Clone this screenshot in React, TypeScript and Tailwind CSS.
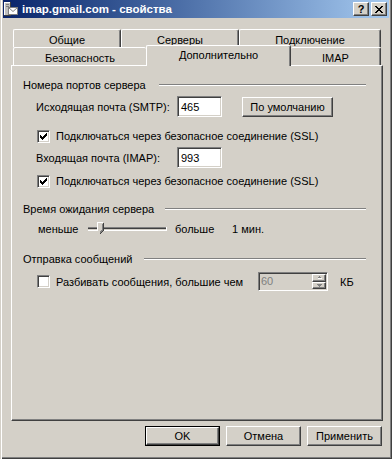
import React from 'react';

const raised =
  'border border-t-white border-l-white border-r-[#404040] border-b-[#404040] shadow-[inset_-1px_-1px_#808080]';
const sunken =
  'border border-t-[#808080] border-l-[#808080] border-r-white border-b-white shadow-[inset_1px_1px_#404040,inset_-1px_-1px_#d4d0c8]';

const CheckMark = () => (
  <svg width="7" height="7" viewBox="0 0 7 7" shapeRendering="crispEdges">
    <rect x="6" y="0" width="1" height="1" />
    <rect x="5" y="1" width="2" height="1" />
    <rect x="0" y="2" width="1" height="1" />
    <rect x="4" y="2" width="3" height="1" />
    <rect x="0" y="3" width="2" height="1" />
    <rect x="3" y="3" width="3" height="1" />
    <rect x="0" y="4" width="5" height="1" />
    <rect x="1" y="5" width="3" height="1" />
    <rect x="2" y="6" width="1" height="1" />
  </svg>
);

const Checkbox = ({ checked }: { checked?: boolean }) => (
  <div className={`w-[13px] h-[13px] shrink-0 bg-white flex items-center justify-center ${sunken}`}>
    {checked && <CheckMark />}
  </div>
);

const Button = ({ children, w, isDefault }: { children: React.ReactNode; w: string; isDefault?: boolean }) =>
  isDefault ? (
    <div className={`${w} h-[20px] border border-black flex`}>
      <div className={`flex-1 flex items-center justify-center ${raised}`}>{children}</div>
    </div>
  ) : (
    <div className={`${w} h-[20px] flex items-center justify-center ${raised}`}>{children}</div>
  );

const GroupHeader = ({ label, w }: { label: string; w: string }) => (
  <div className="flex items-center h-[14px] pl-[11px] pr-[16px]">
    <span className={`${w} shrink-0`}>{label}</span>
    <div className="flex-1 h-[2px] border-t border-t-[#808080] border-b border-b-white" />
  </div>
);

const Tab = ({ label, w, noRight, noLeft }: { label: string; w: string; noRight?: boolean; noLeft?: boolean }) => (
  <div
    className={`${w} h-[18px] shrink-0 border-t border-t-white rounded-t-[2px] text-center pt-[3px] ${
      noLeft ? '' : 'border-l border-l-white'
    } ${noRight ? '' : 'border-r border-r-[#404040] shadow-[inset_-1px_0_#808080]'}`}
  >
    {label}
  </div>
);

const Slider = () => (
  <svg width="88" height="14" viewBox="0 0 88 14" shapeRendering="crispEdges">
    <rect x="4" y="5" width="79" height="1" fill="#808080" />
    <rect x="4" y="6" width="79" height="1" fill="#404040" />
    <rect x="4" y="7" width="79" height="1" fill="#d4d0c8" />
    <rect x="4" y="8" width="79" height="1" fill="#ffffff" />
    <rect x="82" y="5" width="1" height="4" fill="#ffffff" />
    <polygon points="13,0 19,0 19,8 16,11 13,8" fill="#d4d0c8" />
    <polyline points="13,8 13,0 18,0" fill="none" stroke="#ffffff" strokeWidth="1" transform="translate(0.5,0.5)" />
    <polyline points="19,0 19,8 16,11" fill="none" stroke="#404040" strokeWidth="1" transform="translate(0,0.5)" />
    <polyline points="18,1 18,8 16,10" fill="none" stroke="#808080" strokeWidth="1" transform="translate(0,0.5)" />
  </svg>
);

const SpinArrow = ({ up }: { up?: boolean }) => (
  <svg width="5" height="3" viewBox="0 0 5 3" shapeRendering="crispEdges">
    {up ? (
      <>
        <rect x="2" y="0" width="1" height="1" fill="#808080" />
        <rect x="1" y="1" width="3" height="1" fill="#808080" />
        <rect x="1" y="2" width="4" height="1" fill="#ffffff" />
      </>
    ) : (
      <>
        <rect x="0" y="0" width="5" height="1" fill="#808080" />
        <rect x="1" y="1" width="3" height="1" fill="#808080" />
        <rect x="2" y="2" width="1" height="1" fill="#808080" />
      </>
    )}
  </svg>
);

const TitleIcon = () => (
  <svg width="16" height="16" viewBox="0 0 16 16" shapeRendering="crispEdges">
    <rect x="1" y="1" width="7" height="14" fill="#c0c0c0" />
    <rect x="1" y="1" width="7" height="1" fill="#ffffff" />
    <rect x="1" y="1" width="1" height="14" fill="#ffffff" />
    <rect x="7" y="1" width="1" height="14" fill="#404040" />
    <rect x="1" y="14" width="7" height="1" fill="#404040" />
    <rect x="3" y="3" width="3" height="1" fill="#808080" />
    <rect x="3" y="5" width="3" height="1" fill="#808080" />
    <rect x="5" y="6" width="10" height="8" fill="#ffffff" />
    <rect x="5" y="6" width="10" height="1" fill="#808080" />
    <rect x="5" y="13" width="10" height="1" fill="#808080" />
    <rect x="5" y="6" width="1" height="8" fill="#808080" />
    <rect x="14" y="6" width="1" height="8" fill="#808080" />
    <polyline points="5.5,6.5 10,10.5 14.5,6.5" fill="none" stroke="#808080" strokeWidth="1" shapeRendering="auto" />
  </svg>
);

export default function App() {
  return (
    <div className="w-[392px] h-[459px] bg-[#d4d0c8] px-[3px] pb-[3px] flex flex-col text-[11px] leading-[14px] text-black font-['Liberation_Sans',Arial,sans-serif] shadow-[inset_1px_0_#d4d0c8,inset_2px_0_#ffffff,inset_-1px_-1px_#404040,inset_-2px_-2px_#808080] overflow-hidden">
      {/* title bar */}
      <div className="h-[18px] shrink-0 flex items-center bg-gradient-to-r from-[#0a246a] to-[#a6caf0] pr-[2px]">
        <TitleIcon />
        <span className="ml-[3px] font-bold text-white text-[11.5px]">imap.gmail.com - свойства</span>
        <div className="ml-auto flex gap-[2px]">
          <div className={`w-[16px] h-[14px] bg-[#d4d0c8] flex items-center justify-center font-bold text-[11px] leading-none ${raised}`}>
            ?
          </div>
          <div className={`w-[16px] h-[14px] bg-[#d4d0c8] flex items-center justify-center ${raised}`}>
            <svg width="8" height="7" viewBox="0 0 8 7" shapeRendering="crispEdges">
              <path d="M0 0h2v1h-2zM6 0h2v1h-2zM1 1h2v1h-2zM5 1h2v1h-2zM2 2h4v1h-4zM3 3h2v1h-2zM2 4h4v1h-4zM1 5h2v1h-2zM5 5h2v1h-2zM0 6h2v1h-2zM6 6h2v1h-2z" />
            </svg>
          </div>
        </div>
      </div>

      {/* tabs + panel */}
      <div className="mt-[11px] ml-[8px] mr-[6px] flex flex-col">
        <div className="px-[2px] flex flex-col">
          <div className="flex h-[18px]">
            <Tab label="Общие" w="w-[108px]" />
            <Tab label="Серверы" w="w-[118px]" />
            <Tab label="Подключение" w="w-[142px]" />
          </div>
          <div className="flex h-[18px] items-start">
            <Tab label="Безопасность" w="w-[133px]" noRight />
            <div className="relative z-10 w-[145px] h-[21px] -mt-[2px] shrink-0 bg-[#d4d0c8] border-t border-t-white border-l border-l-white border-r border-r-[#404040] shadow-[inset_-1px_0_#808080] rounded-t-[2px] text-center pt-[2px]">
              Дополнительно
            </div>
            <Tab label="IMAP" w="w-[90px]" noLeft />
          </div>
        </div>

        <div className={`h-[356px] flex flex-col ${raised}`}>
          <div className="mt-[12px]">
            <GroupHeader label="Номера портов сервера" w="w-[136px]" />
          </div>

          <div className="mt-[4px] h-[21px] flex items-center pl-[24px]">
            <span className="w-[141px] shrink-0">Исходящая почта (SMTP):</span>
            <div className={`w-[45px] h-[21px] bg-white flex items-center pl-[3px] ${sunken}`}>465</div>
            <div className="ml-[20px]">
              <Button w="w-[91px]">По умолчанию</Button>
            </div>
          </div>

          <div className="mt-[12px] h-[14px] flex items-center pl-[25px]">
            <Checkbox checked />
            <span className="ml-[6px]">Подключаться через безопасное соединение (SSL)</span>
          </div>

          <div className="mt-[4px] h-[21px] flex items-center pl-[24px]">
            <span className="w-[141px] shrink-0">Входящая почта (IMAP):</span>
            <div className={`w-[45px] h-[21px] bg-white flex items-center pl-[3px] ${sunken}`}>993</div>
          </div>

          <div className="mt-[6px] h-[14px] flex items-center pl-[25px]">
            <Checkbox checked />
            <span className="ml-[6px]">Подключаться через безопасное соединение (SSL)</span>
          </div>

          <div className="mt-[14px]">
            <GroupHeader label="Время ожидания сервера" w="w-[142px]" />
          </div>

          <div className="mt-[6px] h-[14px] flex items-center pl-[26px]">
            <span className="w-[46px] shrink-0">меньше</span>
            <Slider />
            <span className="ml-[3px] w-[57px] shrink-0">больше</span>
            <span>1 мин.</span>
          </div>

          <div className="mt-[16px]">
            <GroupHeader label="Отправка сообщений" w="w-[121px]" />
          </div>

          <div className="mt-[6px] h-[19px] flex items-center pl-[25px]">
            <Checkbox />
            <span className="ml-[6px] w-[202px] shrink-0">Разбивать сообщения, большие чем</span>
            <div className={`w-[70px] h-[19px] bg-[#d4d0c8] flex ${sunken}`}>
              <span className="flex-1 pl-[2px] leading-[17px] text-[#808080]">60</span>
              <div className="w-[15px] flex flex-col py-[1px] pr-[1px]">
                <div className={`flex-1 flex items-center justify-center ${raised}`}>
                  <SpinArrow up />
                </div>
                <div className={`flex-1 flex items-center justify-center ${raised}`}>
                  <SpinArrow />
                </div>
              </div>
            </div>
            <span className="ml-[12px]">КБ</span>
          </div>
        </div>

        <div className="mt-[5px] flex justify-end gap-[6px] pr-[1px]">
          <Button w="w-[75px]" isDefault>
            OK
          </Button>
          <Button w="w-[75px]">Отмена</Button>
          <Button w="w-[75px]">Применить</Button>
        </div>
      </div>
    </div>
  );
}
